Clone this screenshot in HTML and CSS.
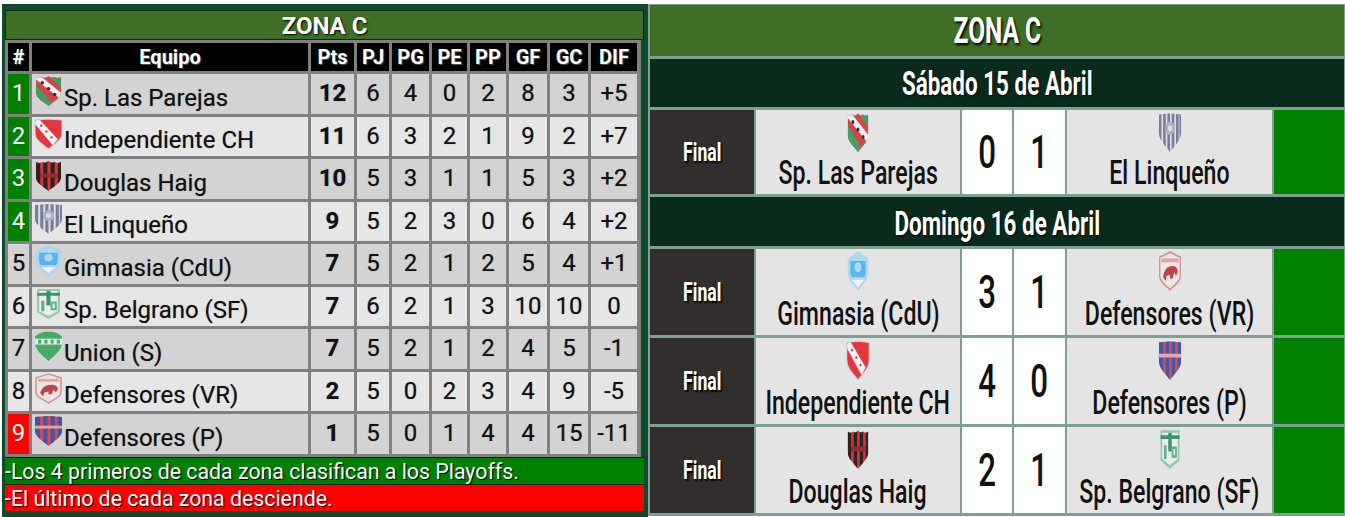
FILE: index.html
```html
<!DOCTYPE html>
<html lang="es">
<head>
  <meta charset="UTF-8">
  <title>Zona C</title>
  <link rel="stylesheet" href="styles.css">
</head>
<body>
  <svg class="defs" aria-hidden="true">
    <defs>
      <clipPath id="shield"><path d="M2 2 Q5 4 8 2 Q11 4 14 1 Q17 4 20 2 Q23 4 26 2 V18 C26 24 19 27 14 32 C9 27 2 24 2 18Z"/></clipPath>
      <clipPath id="shield-round"><path d="M1 2 L14 1 L27 2 V16 C27 23 19 27 14 32 C9 27 1 23 1 16Z"/></clipPath>
    </defs>
    <symbol id="c-parejas" viewBox="0 0 28 32" preserveAspectRatio="none"><g clip-path="url(#shield)"><rect width="28" height="32" fill="#d3343a"/><path d="M0 8 L20 32 H10 L0 20Z" fill="#2f9a55"/><path d="M14 0 L28 15 V6 L22 0Z" fill="#2f9a55"/><path d="M0 3 L5 0 L28 20 V27 Z" fill="#f2f2f2"/></g><circle cx="8" cy="8" r="1.7" fill="#222"/><circle cx="14" cy="14" r="1.7" fill="#222"/><circle cx="20" cy="20" r="1.7" fill="#222"/></symbol>
    <symbol id="c-indep" viewBox="0 0 28 32" preserveAspectRatio="none"><g clip-path="url(#shield-round)"><rect width="28" height="32" fill="#e2252f"/><path d="M0 5 L4 0 L23 22 L18 28 Z" fill="#f4f4f4"/></g><path d="M1 2 L14 1 L27 2 V16 C27 23 19 27 14 32 C9 27 1 23 1 16Z" fill="none" stroke="#ccc" stroke-width="1"/><circle cx="7" cy="8" r="1.2" fill="#a33"/><circle cx="12" cy="14" r="1.2" fill="#a33"/><circle cx="17" cy="20" r="1.2" fill="#a33"/></symbol>
    <symbol id="c-douglas" viewBox="0 0 28 32" preserveAspectRatio="none"><g clip-path="url(#shield)"><rect width="28" height="32" fill="#d8202a"/><rect x="1" width="5" height="32" fill="#181010"/><rect x="9" width="4" height="32" fill="#181010"/><rect x="16" width="4" height="32" fill="#181010"/><rect x="23" width="5" height="32" fill="#181010"/><rect x="6" y="14" width="17" height="4" fill="#8a1a20"/></g></symbol>
    <symbol id="c-linqueno" viewBox="0 0 28 32" preserveAspectRatio="none"><g clip-path="url(#shield-round)"><rect width="28" height="32" fill="#dcdce4"/><rect x="1" width="3" height="32" fill="#6f7190"/><rect x="6" width="3" height="32" fill="#6f7190"/><rect x="11" width="3" height="32" fill="#6f7190"/><rect x="16" width="3" height="32" fill="#6f7190"/><rect x="21" width="3" height="32" fill="#6f7190"/><rect x="25" width="3" height="32" fill="#6f7190"/></g><circle cx="14" cy="13" r="5.5" fill="#a9abbd"/><circle cx="14" cy="13" r="2.5" fill="#dcdce4"/></symbol>
    <symbol id="c-gimnasia" viewBox="0 0 28 32" preserveAspectRatio="none"><path d="M2 6 L14 0 L26 6 V17 C26 24 19 27 14 32 C9 27 2 24 2 17Z" fill="#a8d8f4"/><path d="M5 8 H23 V17 C23 19 22 20 21 21 H7 C6 20 5 19 5 17Z" fill="#4fb0ec"/><path d="M7 23 H21 L14 29Z" fill="#f4f8fb"/><circle cx="14" cy="13" r="4" fill="#a8d8f4"/></symbol>
    <symbol id="c-belgrano" viewBox="0 0 28 32" preserveAspectRatio="none"><path d="M3 1 H25 V25 L14 32 L3 25Z" fill="#8fc4ab"/><path d="M5 3 H23 V24 L14 29 L5 24Z" fill="#e8f0ec"/><rect x="3" y="5" width="22" height="3" fill="#2e8a63"/><rect x="12" y="3" width="4" height="15" fill="#2e8a63"/><rect x="7" y="13" width="3" height="11" fill="#58a585"/><path d="M16 14 H22 V23 H16Z M18 16 V21 H20 V16Z" fill="#58a585" fill-rule="evenodd"/></symbol>
    <symbol id="c-union" viewBox="0 0 28 32" preserveAspectRatio="none"><path d="M1 7 C6 0 22 0 27 7 V13 C27 21 20 26 14 32 C8 26 1 21 1 13Z" fill="#3ba55c"/><rect x="1" y="9" width="26" height="6" fill="#e8f4ec"/><rect x="4" y="10" width="3" height="4" fill="#3ba55c"/><rect x="10" y="10" width="3" height="4" fill="#3ba55c"/><rect x="16" y="10" width="3" height="4" fill="#3ba55c"/><rect x="22" y="10" width="3" height="4" fill="#3ba55c"/></symbol>
    <symbol id="c-defvr" viewBox="0 0 28 32" preserveAspectRatio="none"><path d="M2 5 L14 1 L26 5 V20 C26 25 19 27 14 31 C9 27 2 25 2 20Z" fill="#eee4e4" stroke="#c98686" stroke-width="1.4"/><rect x="4" y="6" width="20" height="3" fill="#d8a4a4"/><path d="M6 21 C7 15 11 12 17 12 C20 12 23 13 23 17 L21 20 L19 17 L17 22 H14 V19 L10 20 L9 24Z" fill="#b8343c"/></symbol>
    <symbol id="c-defp" viewBox="0 0 28 32" preserveAspectRatio="none"><g clip-path="url(#shield-round)"><rect width="28" height="32" fill="#e03a3f"/><rect x="1" width="5" height="32" fill="#2c4aa8"/><rect x="9" width="4" height="32" fill="#2c4aa8"/><rect x="16" width="4" height="32" fill="#2c4aa8"/><rect x="23" width="5" height="32" fill="#2c4aa8"/><rect y="11" width="28" height="3" fill="#e8a0a8"/></g></symbol>
  </svg>

  <div class="page">
    <section class="standings">
      <h2 class="zone-title">ZONA C</h2>
      <div class="table">
        <div class="th">#</div><div class="th">Equipo</div><div class="th">Pts</div><div class="th">PJ</div><div class="th">PG</div><div class="th">PE</div><div class="th">PP</div><div class="th">GF</div><div class="th">GC</div><div class="th">DIF</div>

        <div class="td pos up">1</div><div class="td team"><svg class="crest"><use href="#c-parejas"/></svg><span>Sp. Las Parejas</span></div><div class="td pts">12</div><div class="td">6</div><div class="td">4</div><div class="td">0</div><div class="td">2</div><div class="td">8</div><div class="td">3</div><div class="td">+5</div>
        <div class="td even pos up">2</div><div class="td even team"><svg class="crest"><use href="#c-indep"/></svg><span>Independiente CH</span></div><div class="td even pts">11</div><div class="td even">6</div><div class="td even">3</div><div class="td even">2</div><div class="td even">1</div><div class="td even">9</div><div class="td even">2</div><div class="td even">+7</div>
        <div class="td pos up">3</div><div class="td team"><svg class="crest"><use href="#c-douglas"/></svg><span>Douglas Haig</span></div><div class="td pts">10</div><div class="td">5</div><div class="td">3</div><div class="td">1</div><div class="td">1</div><div class="td">5</div><div class="td">3</div><div class="td">+2</div>
        <div class="td even pos up">4</div><div class="td even team"><svg class="crest"><use href="#c-linqueno"/></svg><span>El Linqueño</span></div><div class="td even pts">9</div><div class="td even">5</div><div class="td even">2</div><div class="td even">3</div><div class="td even">0</div><div class="td even">6</div><div class="td even">4</div><div class="td even">+2</div>
        <div class="td pos">5</div><div class="td team"><svg class="crest"><use href="#c-gimnasia"/></svg><span>Gimnasia (CdU)</span></div><div class="td pts">7</div><div class="td">5</div><div class="td">2</div><div class="td">1</div><div class="td">2</div><div class="td">5</div><div class="td">4</div><div class="td">+1</div>
        <div class="td even pos">6</div><div class="td even team"><svg class="crest"><use href="#c-belgrano"/></svg><span>Sp. Belgrano (SF)</span></div><div class="td even pts">7</div><div class="td even">6</div><div class="td even">2</div><div class="td even">1</div><div class="td even">3</div><div class="td even">10</div><div class="td even">10</div><div class="td even">0</div>
        <div class="td pos">7</div><div class="td team"><svg class="crest"><use href="#c-union"/></svg><span>Union (S)</span></div><div class="td pts">7</div><div class="td">5</div><div class="td">2</div><div class="td">1</div><div class="td">2</div><div class="td">4</div><div class="td">5</div><div class="td">-1</div>
        <div class="td even pos">8</div><div class="td even team"><svg class="crest"><use href="#c-defvr"/></svg><span>Defensores (VR)</span></div><div class="td even pts">2</div><div class="td even">5</div><div class="td even">0</div><div class="td even">2</div><div class="td even">3</div><div class="td even">4</div><div class="td even">9</div><div class="td even">-5</div>
        <div class="td pos down">9</div><div class="td team"><svg class="crest"><use href="#c-defp"/></svg><span>Defensores (P)</span></div><div class="td pts">1</div><div class="td">5</div><div class="td">0</div><div class="td">1</div><div class="td">4</div><div class="td">4</div><div class="td">15</div><div class="td">-11</div>
      </div>
      <p class="note note-up">-Los 4 primeros de cada zona clasifican a los Playoffs.</p>
      <p class="note note-down">-El último de cada zona desciende.</p>
    </section>

    <section class="fixture">
      <div class="fx-title"><span class="squeeze">ZONA C</span></div>
      <div class="fx-date"><span class="squeeze">Sábado 15 de Abril</span></div>

      <div class="fx-state"><span class="squeeze">Final</span></div>
      <div class="fx-team"><svg class="fx-crest"><use href="#c-parejas"/></svg><span class="squeeze">Sp. Las Parejas</span></div>
      <div class="fx-score"><span class="squeeze">0</span></div>
      <div class="fx-score"><span class="squeeze">1</span></div>
      <div class="fx-team"><svg class="fx-crest"><use href="#c-linqueno"/></svg><span class="squeeze">El Linqueño</span></div>
      <div class="fx-flag"></div>

      <div class="fx-date fx-date-low"><span class="squeeze">Domingo 16 de Abril</span></div>

      <div class="fx-state"><span class="squeeze">Final</span></div>
      <div class="fx-team"><svg class="fx-crest"><use href="#c-gimnasia"/></svg><span class="squeeze">Gimnasia (CdU)</span></div>
      <div class="fx-score"><span class="squeeze">3</span></div>
      <div class="fx-score"><span class="squeeze">1</span></div>
      <div class="fx-team"><svg class="fx-crest"><use href="#c-defvr"/></svg><span class="squeeze">Defensores (VR)</span></div>
      <div class="fx-flag"></div>

      <div class="fx-state"><span class="squeeze">Final</span></div>
      <div class="fx-team"><svg class="fx-crest"><use href="#c-indep"/></svg><span class="squeeze">Independiente CH</span></div>
      <div class="fx-score"><span class="squeeze">4</span></div>
      <div class="fx-score"><span class="squeeze">0</span></div>
      <div class="fx-team"><svg class="fx-crest"><use href="#c-defp"/></svg><span class="squeeze">Defensores (P)</span></div>
      <div class="fx-flag"></div>

      <div class="fx-state"><span class="squeeze">Final</span></div>
      <div class="fx-team"><svg class="fx-crest"><use href="#c-douglas"/></svg><span class="squeeze">Douglas Haig</span></div>
      <div class="fx-score"><span class="squeeze">2</span></div>
      <div class="fx-score"><span class="squeeze">1</span></div>
      <div class="fx-team"><svg class="fx-crest"><use href="#c-belgrano"/></svg><span class="squeeze">Sp. Belgrano (SF)</span></div>
      <div class="fx-flag"></div>
    </section>
  </div>
</body>
</html>
```

FILE: styles.css
```css
* {
  margin: 0;
  padding: 0;
  box-sizing: border-box;
}
html, body {
  height: 517px;
  overflow: hidden;
}
body {
  background: #fff;
  font-family: Roboto, "Liberation Sans", sans-serif;
  color: #111;
}
.defs {
  display: block;
  width: 0;
  height: 0;
}
.page {
  display: flex;
  padding: 4px 0 0 2px;
  height: 517px;
}

/* tabla de posiciones */
.standings {
  width: 646px;
  height: 513px;
  background: #0f4a2e;
  padding: 6px 0 0 3px;
}
.zone-title {
  width: 639px;
  height: 30px;
  background: #3f6f26;
  border: 1px solid #10230f;
  color: #fff;
  font-size: 24px;
  font-weight: 700;
  line-height: 30px;
  text-align: center;
  text-shadow: 1px 1px 2px #000;
}
.table {
  width: 636px;
  display: grid;
  grid-template-columns: 21px 276px 43px 32px 37px 35px 36px 38px 38px 46px;
  grid-template-rows: 28px repeat(9, 39.5px);
  gap: 3px;
  padding: 3px;
  background: #808080;
}
.th {
  background: #000;
  color: #fff;
  font-size: 20px;
  font-weight: 700;
  line-height: 28px;
  text-align: center;
  text-shadow: 1px 1px 1px #555;
}
.td {
  background: #d3d3d3;
  font-size: 24px;
  line-height: 39px;
  text-align: center;
  text-shadow: 0 0 1px rgba(0, 0, 0, 0.45);
}
.even {
  background: #e6e6e6;
}
.pos.up {
  background: #008000;
  color: #fff;
}
.pos.down {
  background: #ff0000;
  color: #fff;
}
.pts {
  font-weight: 700;
}
.team {
  display: flex;
  align-items: flex-end;
  padding-left: 2px;
  gap: 1px;
  text-align: left;
}
.team span {
  line-height: 28px;
  margin-bottom: 2px;
}
.crest {
  align-self: flex-start;
  width: 29px;
  height: 31px;
  margin-top: 1px;
  opacity: 0.9;
}
.note {
  width: 639px;
  height: 27px;
  color: #fff;
  font-size: 21.3px;
  line-height: 27px;
  border-top: 1px solid #10230f;
  text-shadow: 1px 1px 1px #000;
}
.note-up {
  background: #008000;
}
.note-down {
  background: #ff0000;
}

/* partidos */
.fixture {
  width: 697px;
  height: 512px;
  padding: 1px 1px 1px 2px;
  background: #7f9f90;
  display: grid;
  grid-template-columns: 104px 204px 50px 51px 205px 70px;
  grid-template-rows: 51px 48px 84px 49px 86px 86px 86px;
  gap: 3px 2px;
}
.fx-title, .fx-date {
  grid-column: 1 / -1;
  display: flex;
  justify-content: center;
  align-items: center;
  color: #fff;
  font-weight: 700;
  white-space: nowrap;
}
.fx-title {
  background: #3f6f26;
  font-size: 36px;
  text-shadow: 2px 2px 3px #000;
}
.fx-date {
  background: #0a2a1c;
  font-size: 33px;
  text-shadow: 1px 1px 2px #000;
}
.fx-date-low {
  padding-top: 4px;
}
.squeeze {
  display: inline-block;
  white-space: nowrap;
  transform: scaleX(0.68);
}
.fx-state {
  background: #322e2e;
  color: #fff;
  font-size: 26px;
  font-weight: 700;
  display: flex;
  justify-content: center;
  align-items: center;
  text-shadow: 2px 2px 2px #000;
}
.fx-team {
  background: #e4e4e4;
  display: flex;
  flex-direction: column;
  justify-content: space-between;
  align-items: center;
  padding-bottom: 3px;
  font-size: 34px;
  font-weight: 500;
  line-height: 38px;
  overflow: hidden;
}
.fx-crest {
  flex: none;
  width: 24px;
  height: 40px;
  margin-top: 2px;
  opacity: 0.9;
}
.fx-score {
  background: #fff;
  font-size: 46px;
  font-weight: 500;
  display: flex;
  justify-content: center;
  align-items: center;
}
.fx-flag {
  background: #008000;
}
```
